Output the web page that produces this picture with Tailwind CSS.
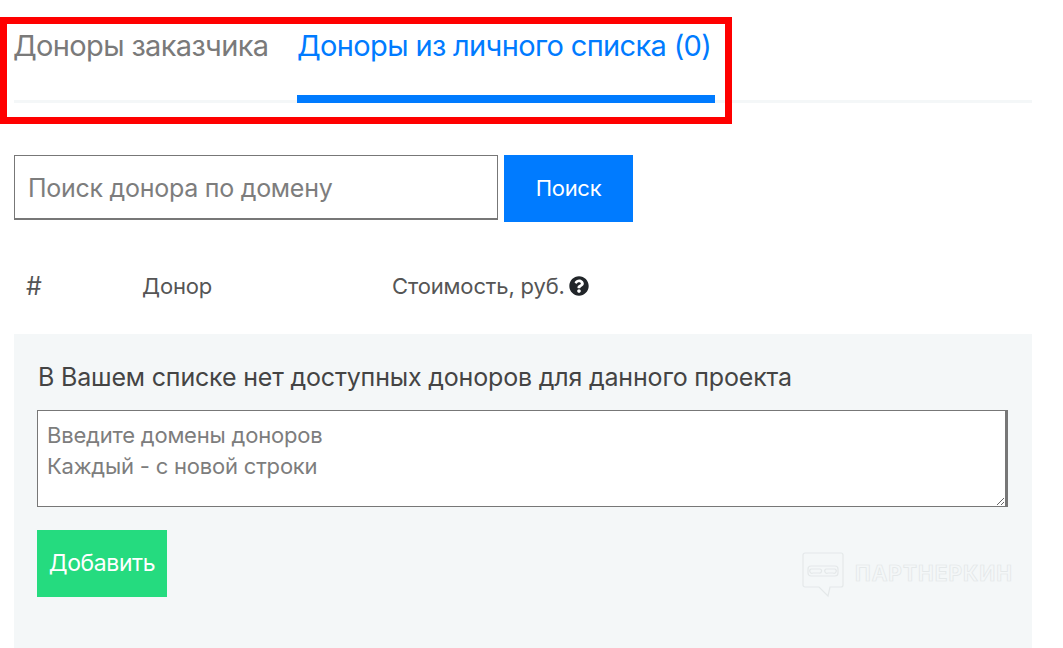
<!DOCTYPE html>
<html lang="ru">
<head>
<meta charset="utf-8">
<script src="https://cdn.jsdelivr.net/npm/@tailwindcss/browser@4"></script>
</head>
<body class="bg-white overflow-hidden">
<div class="relative w-[1063px] h-[648px] overflow-hidden font-['Inter','Noto_Sans',sans-serif] text-[#6c757d]">
  <div class="absolute left-0 top-[17px] w-[732px] h-[107px] border-[7px] border-[#ff0000] pointer-events-none z-10"></div>
  <div class="pl-[14px] w-[1032px]">
    <div class="flex h-[103px] border-b-[3px] border-[#f4f7f8] pt-[28px] gap-[29px] text-[29px] leading-[36px] tracking-[-0.65px]">
      <div class="w-[254px] whitespace-nowrap text-[#7a7a7a] -indent-[1px]">Доноры заказчика</div>
      <div class="w-[418px] h-[75px] whitespace-nowrap text-[#007bff] border-b-[8px] border-[#007bff]">Доноры из личного списка (0)</div>
    </div>
    <div class="flex mt-[52px] gap-[6px]">
      <input class="w-[484px] h-[65px] border border-[#777] border-b-2 pl-[13px] pt-[1px] text-[25px] tracking-[-0.27px] placeholder:text-[#7d7d7d] outline-none bg-white" placeholder="Поиск донора по домену">
      <button class="w-[129px] h-[67px] bg-[#007bff] text-white text-[22px] tracking-[-0.3px]">Поиск</button>
    </div>
    <div class="flex items-center h-[30px] mt-[49px] text-[22px] tracking-[-0.15px] text-[#555]">
      <div class="w-[128px] pl-[12px] pt-[1px] text-[25px]">#</div>
      <div class="w-[250px]">Донор</div>
      <div class="flex items-center gap-[4px]">
        <span>Стоимость, руб.</span>
        <svg viewBox="0 0 512 512" class="w-[20px] h-[20px]" fill="#212529"><path d="M504 256c0 136.997-111.043 248-248 248S8 392.997 8 256C8 119.083 119.043 8 256 8s248 111.083 248 248zM262.655 90c-54.497 0-89.255 22.957-116.549 63.758-3.536 5.286-2.353 12.415 2.715 16.258l34.699 26.31c5.205 3.947 12.621 3.008 16.665-2.122 17.864-22.658 30.113-35.797 57.303-35.797 20.429 0 45.698 13.148 45.698 32.958 0 14.976-12.363 22.667-32.534 33.976C247.128 238.528 216 254.941 216 296v4c0 6.627 5.373 12 12 12h56c6.627 0 12-5.373 12-12v-1.333c0-28.462 83.186-29.647 83.186-106.667 0-58.002-60.165-102-116.531-102zM256 338c-25.365 0-46 20.635-46 46 0 25.364 20.635 46 46 46s46-20.636 46-46c0-25.365-20.635-46-46-46z"/></svg>
      </div>
    </div>
    <div class="relative mt-[33px] h-[320px] bg-[#f4f7f8] px-[23px] pt-[28px]">
      <div class="text-[25px] leading-[30px] tracking-[-0.18px] text-[#444] pl-[1px]">В Вашем списке нет доступных доноров для данного проекта</div>
      <textarea class="block mt-[18px] w-[971px] h-[97px] border border-[#777] border-r-[3px] bg-white px-[9px] py-[9px] text-[22px] leading-[31px] tracking-[-0.2px] placeholder:text-[#7d7d7d] outline-none" placeholder="Введите домены доноров&#10;Каждый - с новой строки"></textarea>
      <button class="block mt-[23px] w-[130px] h-[67px] bg-[#25db7f] text-white text-[23px] tracking-[-0.4px]">Добавить</button>
      <div class="absolute left-[788px] top-[218px] flex items-center gap-[11px]">
        <svg viewBox="0 0 42 46" class="w-[42px] h-[46px]" fill="none" stroke="#e4e8e9" stroke-width="1.200"><path d="M3 1h36a2 2 0 0 1 2 2v30a2 2 0 0 1-2 2H28L26 44 17 35H3a2 2 0 0 1-2-2V3a2 2 0 0 1 2-2z"/><path d="M6 17a3 3 0 0 1 3-3h24a3 3 0 0 1 3 3v4a3 3 0 0 1-3 3H9a3 3 0 0 1-3-3z"/><path d="M9 17h9a2 2 0 0 1-1 4h-6a2 2 0 0 1-2-4zM24 17h9a2 2 0 0 1-2 4h-5a2 2 0 0 1-2-4z"/></svg>
        <span class="text-[21px] font-bold tracking-[1px] text-transparent [-webkit-text-stroke:0.7px_#e2e6e7] mb-[2px]">ПАРТНЕРКИН</span>
      </div>
    </div>
  </div>
</div>
</body>
</html>
